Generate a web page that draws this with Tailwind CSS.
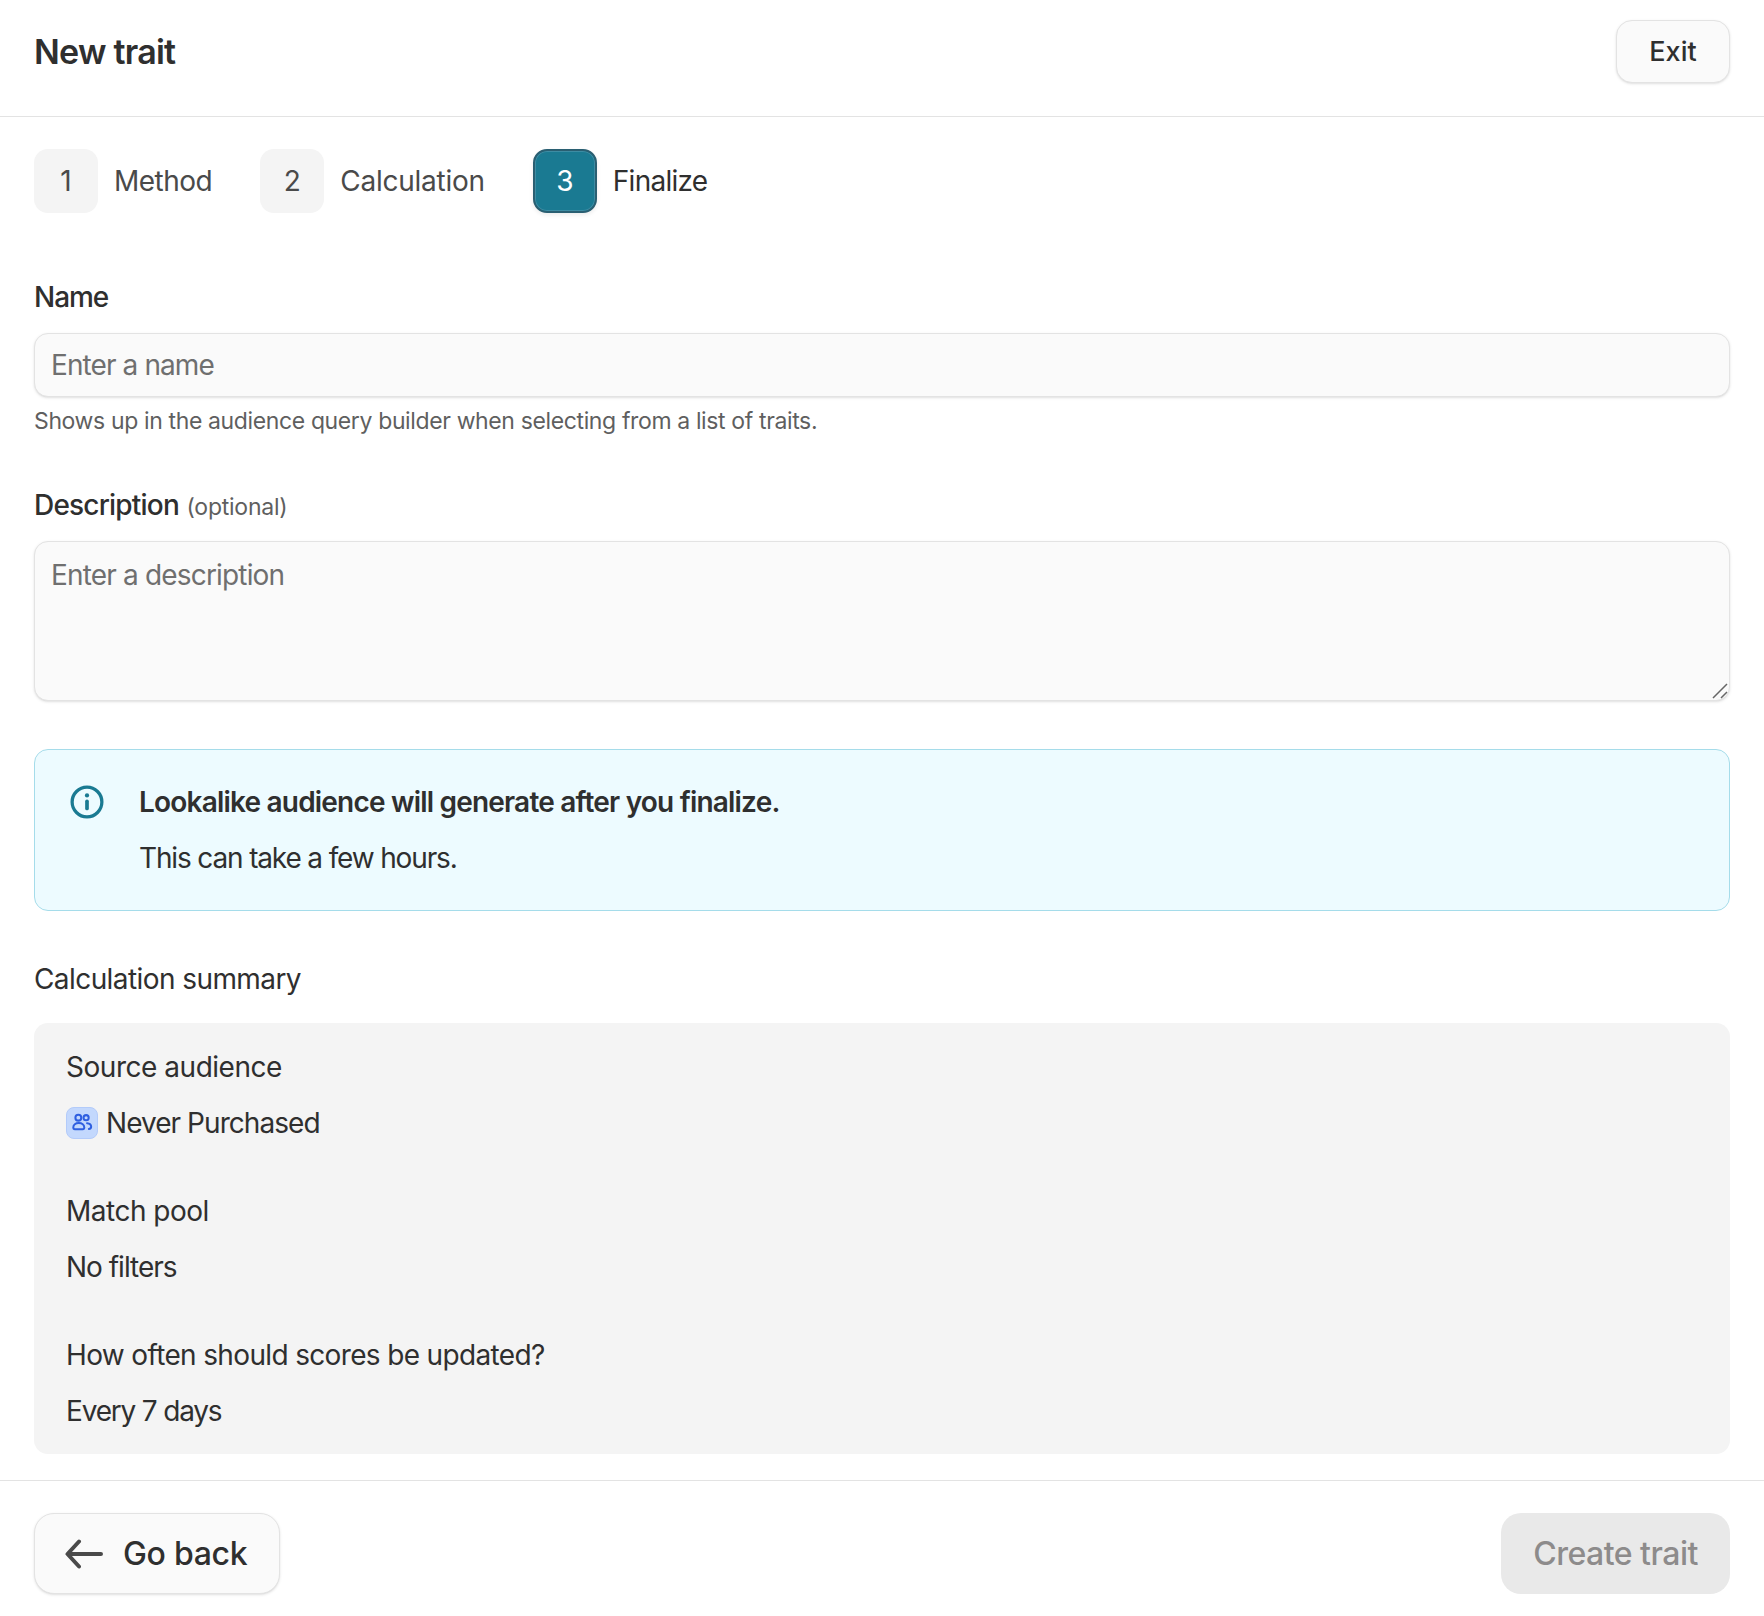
<!DOCTYPE html>
<html lang="en">
<head>
  <meta charset="UTF-8" />
  <meta name="viewport" content="width=device-width, initial-scale=1.0" />
  <title>New trait</title>
  <script src="https://cdn.jsdelivr.net/npm/@tailwindcss/browser@4"></script>
</head>
<body class="bg-white min-h-screen font-['Inter',sans-serif] text-[#2f2f2f]">
  <div class="flex flex-col h-[1616px]">
    <header class="flex items-start justify-between h-[117px] px-[34px] pt-[20px] border-b border-[#e3e3e3]">
      <h1 class="text-[34px] leading-[63px] font-semibold tracking-[-0.75px]">New trait</h1>
      <button class="w-[114px] h-[63px] pt-[2px] rounded-[16px] border border-[#e3e3e3] bg-[#fafafa] shadow-sm text-[27px] font-medium">Exit</button>
    </header>

    <div class="flex-1 px-[34px] pt-[32px]">
      <!-- steps -->
      <div class="flex items-center text-[28px] text-[#4a4a4a] h-[64px]">
        <div class="flex items-center gap-[16px] mr-[48px]">
          <span class="flex items-center justify-center w-[64px] h-[64px] rounded-[14px] bg-[#f4f4f4]">1</span>
          <span class="tracking-[-0.5px]">Method</span>
        </div>
        <div class="flex items-center gap-[16px] mr-[48px]">
          <span class="flex items-center justify-center w-[64px] h-[64px] rounded-[14px] bg-[#f4f4f4]">2</span>
          <span class="tracking-[-0.25px]">Calculation</span>
        </div>
        <div class="flex items-center gap-[16px]">
          <span class="flex items-center justify-center w-[64px] h-[64px] rounded-[14px] bg-[#1a7a92] border-2 border-[#2a5f72] text-white shadow-[inset_0_0_0_1px_#3d8ca3,0_2px_4px_rgba(0,0,0,0.08)]">3</span>
          <span class="text-[#2f2f2f] tracking-[-0.75px]">Finalize</span>
        </div>
      </div>

      <!-- name -->
      <label class="block mt-[66px] text-[28px] font-medium leading-[36px] tracking-[-1.05px]">Name</label>
      <input type="text" placeholder="Enter a name" class="block w-full h-[64px] mt-[18px] px-[16px] rounded-[14px] border border-[#e3e3e3] bg-[#fafafa] shadow-sm text-[28px] tracking-[-0.9px] placeholder:text-[#6f6f6f] outline-none" />
      <p class="mt-[10px] text-[23px] leading-[28px] tracking-[-0.37px] text-[#5f5f5f]">Shows up in the audience query builder when selecting from a list of traits.</p>

      <!-- description -->
      <div class="mt-[52px] leading-[36px]">
        <span class="text-[28px] font-medium tracking-[-0.8px]">Description</span>
        <span class="ml-[3px] text-[23px] tracking-[-0.25px] text-[#5f5f5f]">(optional)</span>
      </div>
      <div class="relative mt-[14px]">
        <textarea placeholder="Enter a description" class="block w-full h-[160px] px-[16px] pt-[16px] pb-[12px] rounded-[14px] border border-[#e3e3e3] bg-[#fafafa] shadow-sm text-[28px] leading-[34px] tracking-[-0.83px] placeholder:text-[#6f6f6f] outline-none resize-none"></textarea>
        <svg class="absolute right-[2px] bottom-[2px] w-[16px] h-[16px] pointer-events-none text-[#666666]" viewBox="0 0 16 16" fill="none" stroke="currentColor" stroke-width="1.500">
          <path d="M1 15 15 1M9 15l6-6" />
        </svg>
      </div>

      <!-- info -->
      <div class="flex mt-[48px] h-[162px] pl-[35px] pt-[34px] rounded-[14px] border border-[#a5dcea] bg-[#edfbff]">
        <svg class="w-[34px] h-[34px] mt-[1px] shrink-0 text-[#1a7a92]" viewBox="0 0 24 24" fill="none" stroke="currentColor" stroke-width="2.300" stroke-linecap="round">
          <circle cx="12" cy="12" r="10.500" />
          <path d="M12 11.500v5" stroke-width="2.600" />
          <circle cx="12" cy="7.400" r="1.500" fill="currentColor" stroke="none" />
        </svg>
        <div class="ml-[35px]">
          <p class="text-[28px] font-semibold leading-[36px] tracking-[-0.8px]">Lookalike audience will generate after you finalize.</p>
          <p class="mt-[20px] text-[28px] leading-[36px] tracking-[-1.15px]">This can take a few hours.</p>
        </div>
      </div>

      <!-- summary -->
      <h2 class="mt-[50px] text-[28px] leading-[36px] tracking-[-0.58px]">Calculation summary</h2>
      <div class="mt-[26px] h-[431px] px-[32px] pt-[26px] rounded-[14px] bg-[#f4f4f4] text-[28px] leading-[36px]">
        <p class="tracking-[-0.47px]">Source audience</p>
        <div class="flex items-center mt-[20px] gap-[8px]">
          <span class="flex items-center justify-center w-[32px] h-[32px] rounded-[8px] bg-[#c3d8fd] border border-[#b3cbfa]">
            <svg class="w-[22px] h-[22px] text-[#2f5fe0]" viewBox="0 0 24 24" fill="none" stroke="currentColor" stroke-width="2.200" stroke-linecap="round">
              <circle cx="8" cy="6.200" r="3.200" />
              <path d="M2.500 17c0-3 2.500-5 6-5s6 2 6 5c0 1-.8 1.700-1.700 1.700H4.200C3.300 18.700 2.500 18 2.500 17z" />
              <circle cx="16.500" cy="6.200" r="2.800" />
              <path d="M17.500 12.200c2.700.2 4.500 1.800 4.500 4 0 1.300-1 2.300-2.500 2.400" />
            </svg>
          </span>
          <span class="tracking-[-0.95px]">Never Purchased</span>
        </div>
        <p class="mt-[52px] tracking-[-0.5px]">Match pool</p>
        <p class="mt-[20px] tracking-[-1px]">No filters</p>
        <p class="mt-[52px] tracking-[-0.65px]">How often should scores be updated?</p>
        <p class="mt-[20px] tracking-[-1.18px]">Every 7 days</p>
      </div>
    </div>

    <!-- footer -->
    <footer class="flex items-start justify-between h-[136px] px-[34px] pt-[32px] border-t border-[#e3e3e3]">
      <button class="flex items-center w-[246px] h-[81px] pl-[30px] rounded-[20px] border border-[#e3e3e3] bg-[#fafafa] shadow-sm text-[32px] font-medium tracking-[-0.3px]">
        <svg class="w-[38px] h-[30px] text-[#4a4a4a]" viewBox="0 0 38 30" fill="none" stroke="currentColor" stroke-width="4" stroke-linecap="round" stroke-linejoin="round">
          <path d="M36 15H3M14 2.500 2.500 15 14 27.500" />
        </svg>
        <span class="ml-[20px]">Go back</span>
      </button>
      <button class="w-[229px] h-[81px] rounded-[20px] bg-[#e9e9e9] text-[#8d8b8b] text-[32px] font-medium tracking-[-0.5px]">Create trait</button>
    </footer>
  </div>
</body>
</html>
